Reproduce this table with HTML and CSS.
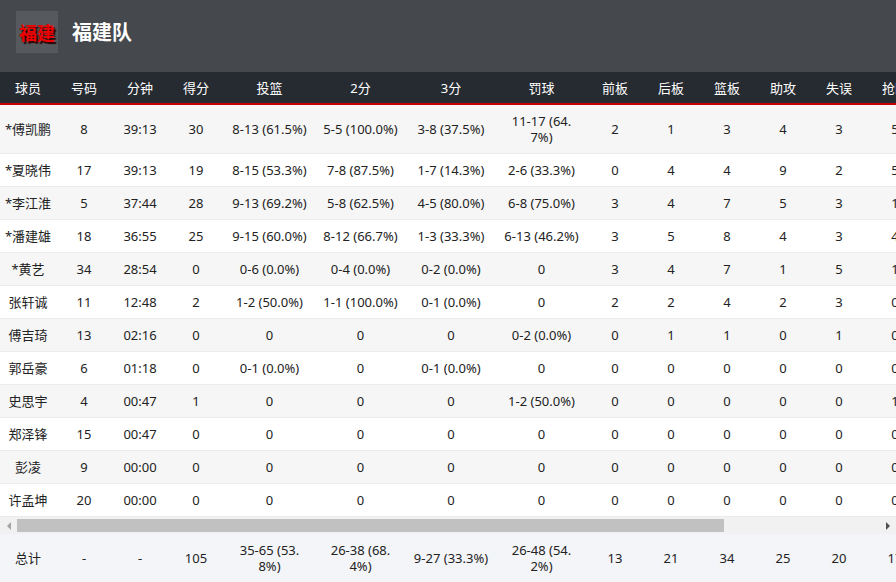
FILE: index.html
```html
<!DOCTYPE html>
<html lang="zh-CN">
<head>
<meta charset="utf-8">
<title>福建队</title>
<link rel="stylesheet" href="styles.css">
</head>
<body>
<div class="page">
  <header class="team-bar">
    <div class="logo">福建</div>
    <h1 class="team-name">福建队</h1>
  </header>

  <div class="scroller">
    <table class="stats">
      <colgroup>
        <col class="c-n"><col class="c-n"><col class="c-n"><col class="c-n">
        <col class="c-w"><col class="c-w"><col class="c-w2"><col class="c-w">
        <col class="c-n"><col class="c-n"><col class="c-n"><col class="c-n"><col class="c-n">
        <col class="c-n"><col class="c-n"><col class="c-n"><col class="c-n">
      </colgroup>
      <thead>
        <tr>
          <th>球员</th><th>号码</th><th>分钟</th><th>得分</th><th>投篮</th><th>2分</th><th>3分</th><th>罚球</th>
          <th>前板</th><th>后板</th><th>篮板</th><th>助攻</th><th>失误</th><th>抢断</th><th>盖帽</th><th>犯规</th><th>+/-</th>
        </tr>
      </thead>
      <tbody>
        <tr><td>*傅凯鹏</td><td>8</td><td>39:13</td><td>30</td><td>8-13 (61.5%)</td><td>5-5 (100.0%)</td><td>3-8 (37.5%)</td><td>11-17 (64.7%)</td><td>2</td><td>1</td><td>3</td><td>4</td><td>3</td><td>5</td><td>0</td><td>2</td><td>12</td></tr>
        <tr><td>*夏晓伟</td><td>17</td><td>39:13</td><td>19</td><td>8-15 (53.3%)</td><td>7-8 (87.5%)</td><td>1-7 (14.3%)</td><td>2-6 (33.3%)</td><td>0</td><td>4</td><td>4</td><td>9</td><td>2</td><td>5</td><td>0</td><td>3</td><td>10</td></tr>
        <tr><td>*李江淮</td><td>5</td><td>37:44</td><td>28</td><td>9-13 (69.2%)</td><td>5-8 (62.5%)</td><td>4-5 (80.0%)</td><td>6-8 (75.0%)</td><td>3</td><td>4</td><td>7</td><td>5</td><td>3</td><td>1</td><td>0</td><td>2</td><td>8</td></tr>
        <tr><td>*潘建雄</td><td>18</td><td>36:55</td><td>25</td><td>9-15 (60.0%)</td><td>8-12 (66.7%)</td><td>1-3 (33.3%)</td><td>6-13 (46.2%)</td><td>3</td><td>5</td><td>8</td><td>4</td><td>3</td><td>4</td><td>1</td><td>3</td><td>9</td></tr>
        <tr><td>*黄艺</td><td>34</td><td>28:54</td><td>0</td><td>0-6 (0.0%)</td><td>0-4 (0.0%)</td><td>0-2 (0.0%)</td><td>0</td><td>3</td><td>4</td><td>7</td><td>1</td><td>5</td><td>1</td><td>0</td><td>4</td><td>3</td></tr>
        <tr><td>张轩诚</td><td>11</td><td>12:48</td><td>2</td><td>1-2 (50.0%)</td><td>1-1 (100.0%)</td><td>0-1 (0.0%)</td><td>0</td><td>2</td><td>2</td><td>4</td><td>2</td><td>3</td><td>0</td><td>0</td><td>1</td><td>-2</td></tr>
        <tr><td>傅吉琦</td><td>13</td><td>02:16</td><td>0</td><td>0</td><td>0</td><td>0</td><td>0-2 (0.0%)</td><td>0</td><td>1</td><td>1</td><td>0</td><td>1</td><td>0</td><td>0</td><td>0</td><td>-1</td></tr>
        <tr><td>郭岳豪</td><td>6</td><td>01:18</td><td>0</td><td>0-1 (0.0%)</td><td>0</td><td>0-1 (0.0%)</td><td>0</td><td>0</td><td>0</td><td>0</td><td>0</td><td>0</td><td>0</td><td>0</td><td>0</td><td>0</td></tr>
        <tr><td>史思宇</td><td>4</td><td>00:47</td><td>1</td><td>0</td><td>0</td><td>0</td><td>1-2 (50.0%)</td><td>0</td><td>0</td><td>0</td><td>0</td><td>0</td><td>1</td><td>0</td><td>0</td><td>1</td></tr>
        <tr><td>郑泽锋</td><td>15</td><td>00:47</td><td>0</td><td>0</td><td>0</td><td>0</td><td>0</td><td>0</td><td>0</td><td>0</td><td>0</td><td>0</td><td>0</td><td>0</td><td>0</td><td>0</td></tr>
        <tr><td>彭凌</td><td>9</td><td>00:00</td><td>0</td><td>0</td><td>0</td><td>0</td><td>0</td><td>0</td><td>0</td><td>0</td><td>0</td><td>0</td><td>0</td><td>0</td><td>0</td><td>0</td></tr>
        <tr><td>许孟坤</td><td>20</td><td>00:00</td><td>0</td><td>0</td><td>0</td><td>0</td><td>0</td><td>0</td><td>0</td><td>0</td><td>0</td><td>0</td><td>0</td><td>0</td><td>0</td><td>0</td></tr>
      </tbody>
    </table>
  </div>

  <div class="hscroll">
    <div class="sb-btn sb-left"><span class="tri tri-left"></span></div>
    <div class="sb-track"><div class="sb-thumb"></div></div>
    <div class="sb-btn sb-right"><span class="tri tri-right"></span></div>
  </div>

  <div class="scroller">
    <table class="stats totals">
      <colgroup>
        <col class="c-n"><col class="c-n"><col class="c-n"><col class="c-n">
        <col class="c-w"><col class="c-w"><col class="c-w2"><col class="c-w">
        <col class="c-n"><col class="c-n"><col class="c-n"><col class="c-n"><col class="c-n">
        <col class="c-n"><col class="c-n"><col class="c-n"><col class="c-n">
      </colgroup>
      <tbody>
        <tr><td>总计</td><td>-</td><td>-</td><td>105</td><td>35-65 (53.8%)</td><td>26-38 (68.4%)</td><td>9-27 (33.3%)</td><td>26-48 (54.2%)</td><td>13</td><td>21</td><td>34</td><td>25</td><td>20</td><td>17</td><td>1</td><td>15</td><td>-</td></tr>
      </tbody>
    </table>
  </div>
</div>
</body>
</html>
```

FILE: styles.css
```css
html, body {
  margin: 0;
  padding: 0;
  background: #ffffff;
}

body {
  font-family: "Noto Sans", "Noto Sans CJK SC", sans-serif;
  font-size: 13px;
  color: #222222;
}

.page {
  width: 896px;
  overflow: hidden;
}

/* Team header */
.team-bar {
  display: flex;
  align-items: center;
  gap: 14px;
  height: 72px;
  box-sizing: border-box;
  padding: 0 16px 8px;
  background: #45484c;
}

.logo {
  width: 42px;
  height: 42px;
  display: flex;
  align-items: center;
  justify-content: center;
  background: #56595d;
  color: #ee0000;
  font-family: "Noto Sans CJK SC", sans-serif;
  font-weight: 700;
  font-size: 18px;
  line-height: 1;
  text-shadow: 2px 2px 1px #2a0000;
}

.team-name {
  margin: 0;
  color: #ffffff;
  font-family: "Noto Sans CJK SC", sans-serif;
  font-size: 20px;
  font-weight: 700;
  line-height: 1;
}

/* Tables */
.scroller {
  width: 896px;
  overflow: hidden;
}

.stats {
  width: 1091px;
  table-layout: fixed;
  border-collapse: collapse;
}

.c-n { width: 56px; }
.c-w { width: 91px; }
.c-w2 { width: 90px; }

.stats th {
  height: 32px;
  box-sizing: border-box;
  padding: 0 4px;
  background: #262a31;
  color: #ffffff;
  font-weight: 400;
  line-height: 16px;
  text-align: center;
  border-bottom: 2px solid #c40000;
  white-space: nowrap;
}

.stats td {
  padding: 8px 4px;
  line-height: 16px;
  text-align: center;
  vertical-align: middle;
  border-bottom: 1px solid #ebebf0;
  word-break: break-all;
}

.stats td:nth-child(n+5):nth-child(-n+8) {
  padding-left: 7px;
  padding-right: 7px;
}

.stats tbody tr:nth-child(odd) td {
  background: #f6f6f6;
}

.stats tbody tr:nth-child(even) td {
  background: #ffffff;
}

.stats.totals tbody tr td {
  background: #f4f5f9;
  border-bottom: 1px solid #e6e7ee;
}

/* Horizontal scrollbar */
.hscroll {
  display: flex;
  height: 17px;
  background: #f1f1f1;
}

.sb-btn {
  width: 17px;
  display: flex;
  align-items: center;
  justify-content: center;
}

.sb-track {
  flex: 1;
  display: flex;
  align-items: center;
}

.sb-thumb {
  width: 707px;
  height: 13px;
  background: #c1c1c1;
}

.tri {
  width: 0;
  height: 0;
  border-top: 4px solid transparent;
  border-bottom: 4px solid transparent;
}

.tri-left {
  border-right: 4px solid #a3a3a3;
}

.tri-right {
  border-left: 4px solid #505050;
}
```
